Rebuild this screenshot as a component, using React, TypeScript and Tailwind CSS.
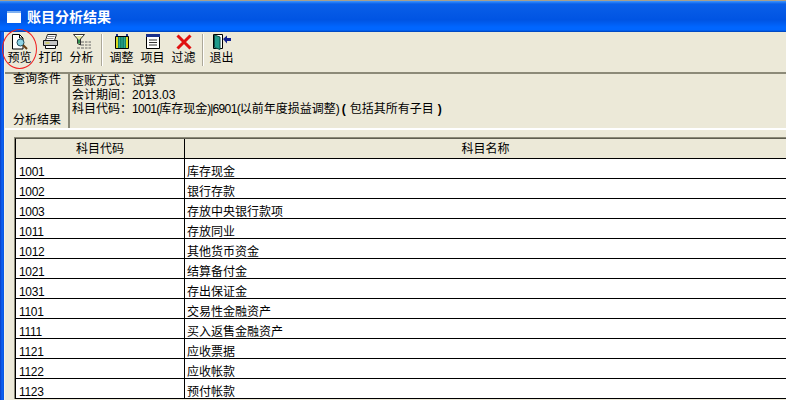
import type { ReactNode } from "react";

const cjk = "font-['Liberation_Sans','Noto_Sans_CJK_SC',sans-serif]";

const rows = [
    ["1001", "库存现金"],
    ["1002", "银行存款"],
    ["1003", "存放中央银行款项"],
    ["1011", "存放同业"],
    ["1012", "其他货币资金"],
    ["1021", "结算备付金"],
    ["1031", "存出保证金"],
    ["1101", "交易性金融资产"],
    ["1111", "买入返售金融资产"],
    ["1121", "应收票据"],
    ["1122", "应收帐款"],
    ["1123", "预付帐款"],
];

function PreviewIcon() {
    return (
        <svg width="17" height="16" viewBox="0 0 17 16">
            <path d="M1.500 0.500h7l3.500 3.500v11h-10.500z" fill="#fff" stroke="#000" />
            <path d="M8.500 0.500v3.500h3.500" fill="none" stroke="#000" />
            <circle cx="9.500" cy="8.500" r="3.500" fill="#8fd4e6" stroke="#1f4f60" />
            <path d="M12 11l4 4" stroke="#6a3f14" strokeWidth="2" />
        </svg>
    );
}

function PrintIcon() {
    return (
        <svg width="17" height="16" viewBox="0 0 17 16">
            <path d="M5.500 0.500h9l-2 6h-9z" fill="#fff" stroke="#222" />
            <path d="M5.500 2.500h7M4.500 4.500h7" stroke="#888" />
            <path d="M1.500 6.500h14v5h-14z" fill="#c4c4c4" stroke="#111" />
            <path d="M3.500 9h4" stroke="#d8d020" />
            <path d="M3.500 11.500h10v3h-10z" fill="#fff" stroke="#111" />
        </svg>
    );
}

function FilterIcon() {
    return (
        <svg width="18" height="16" viewBox="0 0 18 16">
            <path d="M0.500 0.500h11l-4 4.500v6l-3-1.500v-4.500z" fill="#e4e8a0" stroke="#333" />
            <path d="M2 1.500h8" stroke="#fff" />
            <path d="M5 5.500h2v4h-2z" fill="#2f8f4f" />
            <path d="M8 8h3M12 8h2.500M15.500 8h2.500M8 11h3M12 11h2.500M15.500 11h2.500M4 14h3M8 14h3M12 14h2.500M15.500 14h2.500" stroke="#666" />
        </svg>
    );
}

function AdjustIcon() {
    return (
        <svg width="14" height="16" viewBox="0 0 14 16">
            <path d="M1 0h2v2h-2zM11 0h2v2h-2z" fill="#1a2f8a" />
            <path d="M0.500 2.500h13v12h-13z" fill="#d8d820" stroke="#000" />
            <path d="M3 3h8v11h-8z" fill="#12806a" />
            <path d="M4.500 3v11M7 3v11M9.500 3v11" stroke="#2fa892" />
        </svg>
    );
}

function ItemIcon() {
    return (
        <svg width="14" height="16" viewBox="0 0 14 16">
            <path d="M0.500 0.500h13v14h-13z" fill="#fff" stroke="#000" />
            <path d="M0 0h14v3h-14z" fill="#1a2f8a" />
            <path d="M3 6h8M3 8.500h8M3 11h8" stroke="#333" />
        </svg>
    );
}

function CrossIcon() {
    return (
        <svg width="16" height="16" viewBox="0 0 16 16">
            <path d="M1.500 1.500l13 13M14.500 1.500l-13 13" stroke="#e01010" strokeWidth="3" />
        </svg>
    );
}

function ExitIcon() {
    return (
        <svg width="18" height="16" viewBox="0 0 18 16">
            <path d="M0.500 0.500h9v14h-9z" fill="#fff" stroke="#000" />
            <path d="M1.500 1l5.500 2v12.500l-5.500-2z" fill="#1f9a8a" stroke="#0b4a44" />
            <path d="M10 5l4-3.500v2.500h4v3h-4v2.500z" fill="#10208f" />
        </svg>
    );
}

function ToolButton({ icon, label }: { icon: ReactNode; label: string }) {
    return (
        <div className="flex w-[31px] flex-col items-center">
            <div className="flex h-[16px] items-center">{icon}</div>
            <span className="mt-[1px] text-[12px] leading-[14px] whitespace-nowrap text-black">{label}</span>
        </div>
    );
}

function Separator({ className }: { className: string }) {
    return <div className={`h-[32px] w-[2px] border-r border-r-white bg-[#aca899] ${className}`} />;
}

function Tight({ children }: { children: string }) {
    return <span className="tracking-[-1px]">{children}</span>;
}

function Digits({ children }: { children: string }) {
    return <span className="tracking-[-0.6px]">{children}</span>;
}

export default function App() {
    return (
        <div className={`relative h-[400px] w-[786px] overflow-hidden bg-[#ece9d8] ${cjk}`}>
            <div className="flex h-[32px] items-center gap-[6px] bg-[linear-gradient(#a89f8c_0,#a89f8c_1px,#3d95ff_1px,#0a5fe8_4px,#0054e3_20px,#0066ff_27px,#0066ff_30px,#003fb0_32px)] pl-[7px] pt-[2px]">
                <div className="flex h-[12px] w-[14px] flex-col bg-white">
                    <div className="h-[2px] bg-[#7fb0f0]" />
                </div>
                <span className="text-[14px] leading-none font-bold text-white">账目分析结果</span>
            </div>

            <div className="flex h-[410px]">
                <div className="w-[4px] bg-[linear-gradient(90deg,#0a3cc0,#0a62f5_50%,#0855dd)]" />
                <div className="flex min-w-0 flex-1 flex-col border-l border-l-[#f4f2e6]">
                    <div className="-ml-[1px] flex h-[40px] items-start pt-[2px]">
                        <ToolButton icon={<PreviewIcon />} label="预览" />
                        <ToolButton icon={<PrintIcon />} label="打印" />
                        <ToolButton icon={<FilterIcon />} label="分析" />
                        <Separator className="mr-[3px] ml-[4px]" />
                        <ToolButton icon={<AdjustIcon />} label="调整" />
                        <ToolButton icon={<ItemIcon />} label="项目" />
                        <ToolButton icon={<CrossIcon />} label="过滤" />
                        <Separator className="mr-[2px] ml-[3px]" />
                        <ToolButton icon={<ExitIcon />} label="退出" />
                    </div>

                    <div className="flex h-[58px] border-t-2 border-t-[#8c8a78] border-b-2 border-b-white">
                        <div className="flex w-[65px] flex-col justify-between border-r-2 border-r-[#8c8a78] pl-[8px] text-[12px] leading-[16px] text-black">
                            <span className="-mt-[3px]">查询条件</span>
                            <span>分析结果</span>
                        </div>
                        <div className="flex-1 pl-[2px] text-[12px] leading-[14px] text-black">
                            <div>查账方式：试算</div>
                            <div>会计期间：2013.03</div>
                            <div className="whitespace-nowrap">
                                科目代码：<Digits>1001</Digits><Tight>(</Tight>库存现金<Tight>)|</Tight><Digits>6901</Digits><Tight>(</Tight>以前年度损益调整<Tight>)</Tight>
                                <span className="mr-[4px] ml-[3px] font-bold">(</span>包括其所有子目<span className="ml-[4px] font-bold">)</span>
                            </div>
                        </div>
                    </div>

                    <div className="h-[7px]" />

                    <div className="ml-[9px] border-t border-l border-t-[#8c8a78] border-l-[#8c8a78]">
                        <div className="flex h-[21px] border-t border-b border-l border-t-[#5f5d50] border-b-black border-l-black text-[12px] leading-[21px] text-black">
                            <div className="w-[169px] border-r border-r-black text-center">科目代码</div>
                            <div className="flex-1 text-center">科目名称</div>
                        </div>
                        <div className="bg-white">
                            {rows.map((row) => (
                                <div
                                    key={row[0]}
                                    className="flex h-[20px] border-b border-l border-b-black border-l-black text-[12px] leading-[27px] text-black"
                                >
                                    <div className="w-[169px] border-r border-r-black pl-[3px] tracking-[-0.3px]">{row[0]}</div>
                                    <div className="flex-1 pl-[2px]">{row[1]}</div>
                                </div>
                            ))}
                        </div>
                    </div>
                </div>
            </div>

            <div className="absolute top-[29px] left-[2px] h-[40px] w-[35px] rounded-[50%] border border-[#f02020]" />
        </div>
    );
}
